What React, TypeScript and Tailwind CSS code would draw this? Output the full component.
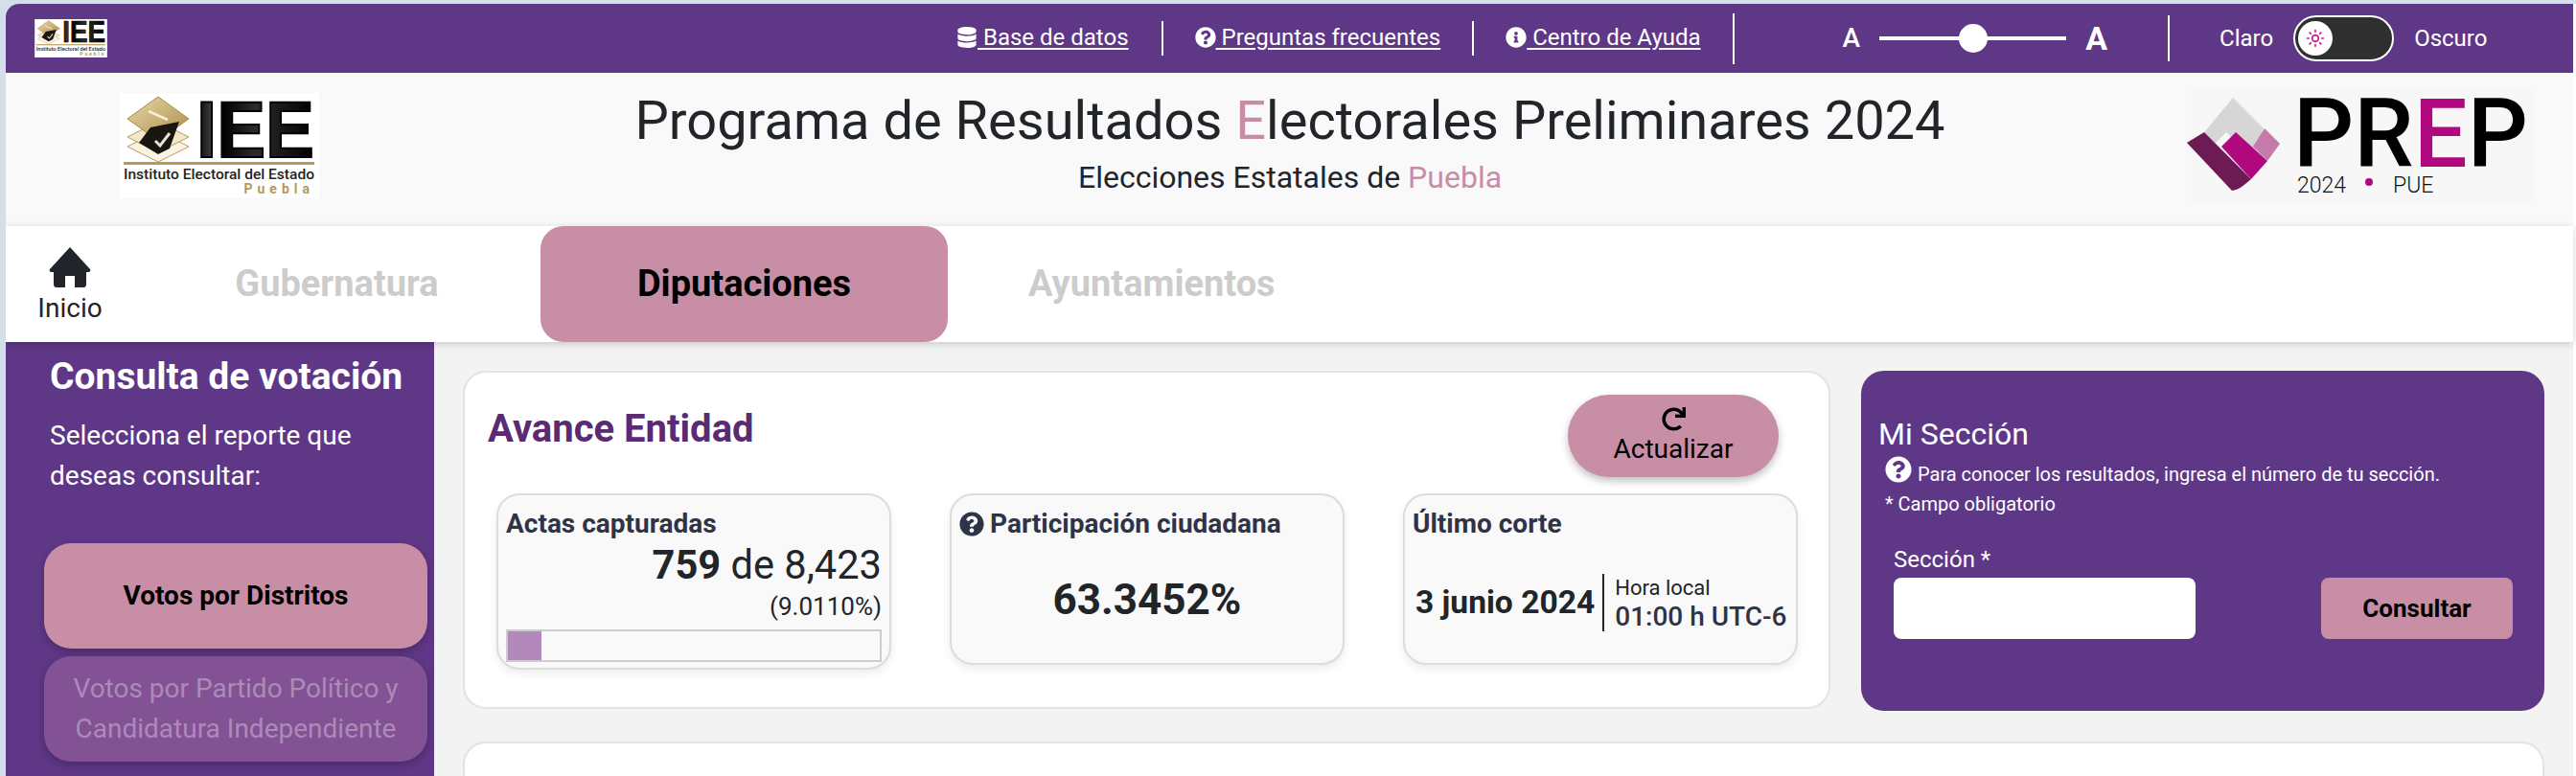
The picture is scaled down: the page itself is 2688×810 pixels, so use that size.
import { FaDatabase, FaInfoCircle, FaQuestionCircle, FaRedo } from "react-icons/fa";
import { Sun } from "lucide-react";

function IeeLogo({ className }: { className: string }) {
  return (
    <svg viewBox="0 0 208 110" className={className}>
      <defs>
        <linearGradient id="ieeLetras" x1="0" x2="1" y1="0" y2="0">
          <stop offset="0" stopColor="#000" />
          <stop offset="0.12" stopColor="#3a3a3a" />
          <stop offset="0.22" stopColor="#000" />
          <stop offset="0.5" stopColor="#2c2c2c" />
          <stop offset="1" stopColor="#000" />
        </linearGradient>
        <linearGradient id="ieeOro" x1="0" x2="1" y1="0" y2="1">
          <stop offset="0" stopColor="#e9d7a8" />
          <stop offset="1" stopColor="#a98a45" />
        </linearGradient>
      </defs>
      <rect width="208" height="110" fill="#fff" />
      <path d="M8 56 40 40 72 56 40 72Z" fill="#fbf4e2" stroke="#b79c5f" />
      <path d="M8 46 40 30 72 46 40 62Z" fill="#f4e7c9" stroke="#b79c5f" />
      <path d="M8 27 40 4 72 27 40 50Z" fill="url(#ieeOro)" stroke="#a98a45" />
      <path d="M30 19 50 28" stroke="#f8efd6" strokeWidth="2.5" />
      <path d="M20 52 32 36 62 30 52 58 40 64Z" fill="#191510" />
      <path d="M37 50 42 55 52 42" fill="none" stroke="#e6e2d6" strokeWidth="3" />
      <text
        x="80"
        y="67"
        textLength="123"
        lengthAdjust="spacingAndGlyphs"
        fontSize="84"
        fontWeight="900"
        stroke="#000"
        strokeWidth="2"
        fill="url(#ieeLetras)"
        fontFamily="Liberation Sans, sans-serif"
      >
        IEE
      </text>
      <rect x="4" y="72" width="199" height="3" fill="#b59a55" />
      <text x="4" y="90" textLength="199" lengthAdjust="spacingAndGlyphs" fontSize="15.5" fontWeight="500" fill="#1f1f1f" fontFamily="Roboto, sans-serif">
        Instituto Electoral del Estado
      </text>
      <text x="203" y="105" textAnchor="end" letterSpacing="5" fontSize="14" fontWeight="700" fill="#b59a55" fontFamily="Roboto, sans-serif">
        Puebla
      </text>
    </svg>
  );
}

function PrepLogo() {
  return (
    <svg viewBox="0 0 364 120" className="h-[120px] w-[364px]">
      <rect width="364" height="120" fill="#f7f7f7" />
      <path d="M49 9 81 41 69 74 57 60 42 45 27 60 19 45Z" fill="#d6d6d6" />
      <path d="M1 56 19 45 68 94C60 100 58 104 48 106Z" fill="#6e1a55" />
      <path d="M37 60 52 45 85 75 68 94Z" fill="#b0087f" />
      <path d="M70 60 82 41 98 57 85 75Z" fill="#c47aaa" />
      <text x="112" y="81" textLength="245" lengthAdjust="spacingAndGlyphs" fontSize="100" fontWeight="500" fill="#000" fontFamily="Roboto, sans-serif">
        PR<tspan fill="#b0087f">E</tspan>P
      </text>
      <text x="116" y="108" fontSize="23" fontWeight="300" fill="#111" fontFamily="Roboto, sans-serif">
        2024
      </text>
      <circle cx="191" cy="97" r="4" fill="#b0087f" />
      <text x="216" y="108" fontSize="23" fontWeight="300" fill="#111" fontFamily="Roboto, sans-serif">
        PUE
      </text>
    </svg>
  );
}

function HomeIcon() {
  return (
    <svg viewBox="0 0 44 44" className="h-[44px] w-[44px]" fill="#212529">
      <path d="M22 0 43 23C44 25 43 26 41 26H39V38C39 41 38 42 36 42H27V30H17V42H8C6 42 5 41 5 38V26H3C1 26 0 25 1 23Z" />
    </svg>
  );
}

export default function App() {
  return (
    <div className="h-[810px] w-full overflow-hidden bg-[#d3e0ea] pl-[6px] pt-[4px] [font-family:Roboto,sans-serif] text-[#212529]">
      <div className="flex h-[806px] flex-col overflow-hidden rounded-tl-[14px] bg-white pr-[3px]">
        {/* barra superior */}
        <div className="flex h-[72px] shrink-0 items-center bg-[#5f3787] text-[24px] text-white">
          <IeeLogo className="ml-[30px] h-[40px] w-[76px]" />
          <a className="ml-[886px] pb-[2px] underline underline-offset-[3px]">
            <FaDatabase className="inline h-[22px] w-[22px] align-[-3px]" /> Base de datos
          </a>
          <div className="ml-[34px] h-[36px] w-[2px] bg-white" />
          <a className="ml-[33px] pb-[2px] underline underline-offset-[3px]">
            <FaQuestionCircle className="inline h-[22px] w-[22px] align-[-3px]" /> Preguntas frecuentes
          </a>
          <div className="ml-[33px] h-[36px] w-[2px] bg-white" />
          <a className="ml-[33px] pb-[2px] underline underline-offset-[3px]">
            <FaInfoCircle className="inline h-[22px] w-[22px] align-[-3px]" /> Centro de Ayuda
          </a>
          <div className="ml-[33px] h-[53px] w-[2px] bg-white" />
          <span className="ml-[113px] text-[28px] font-medium">A</span>
          <div className="ml-[20px] flex h-[4px] w-[195px] items-center justify-center bg-white">
            <div className="h-[30px] w-[30px] rounded-full bg-white" />
          </div>
          <span className="ml-[20px] text-[34px] font-bold">A</span>
          <div className="ml-[63px] h-[48px] w-[2px] bg-white" />
          <span className="ml-[52px]">Claro</span>
          <div className="ml-[21px] flex h-[48px] w-[105px] items-center rounded-full border-2 border-white bg-[#2f2f2f] pl-[3px]">
            <div className="flex h-[36px] w-[36px] items-center justify-center rounded-full bg-white">
              <Sun className="h-[20px] w-[20px] text-[#c0118c]" />
            </div>
          </div>
          <span className="ml-[21px]">Oscuro</span>
        </div>

        {/* encabezado */}
        <div className="flex h-[160px] shrink-0 items-start bg-[#f9f9f9]">
          <IeeLogo className="ml-[119px] mt-[21px] h-[110px] w-[208px]" />
          <div className="ml-[78px] flex w-[1870px] flex-col items-center pt-[16px]">
            <h1 className="text-[56px] leading-[69px]">
              Programa de Resultados <span className="text-[#c78da6]">E</span>lectorales Preliminares 2024
            </h1>
            <p className="text-[32px] leading-[48px]">
              Elecciones Estatales de <span className="text-[#c78da6]">Puebla</span>
            </p>
          </div>
          <div className="mt-[17px] shrink-0">
            <PrepLogo />
          </div>
        </div>

        {/* pestañas */}
        <div className="z-10 flex h-[121px] shrink-0 items-center bg-white shadow-[0_2px_8px_rgba(0,0,0,0.18)]">
          <div className="ml-[34px] flex w-[66px] flex-col items-center pt-[6px]">
            <HomeIcon />
            <span className="text-[28px] leading-[40px]">Inicio</span>
          </div>
          <div className="ml-[139px] w-[213px] whitespace-nowrap text-center text-[38px] font-bold text-[#cccccc]">Gubernatura</div>
          <div className="ml-[106px] flex h-full w-[425px] items-center justify-center rounded-[24px] bg-[#c88ea6] text-[38px] font-bold text-black">
            Diputaciones
          </div>
          <div className="ml-[84px] text-[38px] font-bold text-[#cccccc]">Ayuntamientos</div>
        </div>

        <div className="flex min-h-0 flex-1">
          {/* lateral */}
          <aside className="w-[447px] shrink-0 bg-[#5f3787] pl-[40px] pr-[7px] text-white">
            <h2 className="mt-[14px] whitespace-nowrap pl-[6px] text-[39px] font-bold leading-[44px]">Consulta de votación</h2>
            <p className="mt-[19px] pl-[6px] text-[28px] leading-[42px]">
              Selecciona el reporte que
              <br />
              deseas consultar:
            </p>
            <button className="mt-[49px] flex h-[110px] w-full items-center justify-center rounded-[28px] bg-[#c88ea6] text-[28px] font-bold text-black shadow-[0_3px_8px_rgba(0,0,0,0.25)]">
              Votos por Distritos
            </button>
            <button className="mt-[8px] h-[110px] w-full rounded-[28px] bg-[#835295] text-[28px] leading-[42px] text-[#ab8bb8] shadow-[0_3px_8px_rgba(0,0,0,0.25)]">
              Votos por Partido Político y
              <br />
              Candidatura Independiente
            </button>
          </aside>

          {/* contenido */}
          <main className="min-w-0 flex-1 bg-[#f3f3f3] pl-[30px] pt-[30px]">
            <div className="flex gap-[32px]">
              <section className="h-[353px] w-[1427px] rounded-[24px] border-2 border-[#e3e3e3] bg-white">
                <div className="flex h-[126px]">
                  <h2 className="ml-[24px] mt-[33px] text-[40px] font-bold leading-[52px] text-[#5a2a72]">Avance Entidad</h2>
                  <button className="ml-auto mr-[52px] mt-[23px] flex h-[86px] w-[220px] flex-col items-center justify-center rounded-[43px] bg-[#c88ea6] text-[28px] leading-[34px] text-black shadow-[0_4px_8px_rgba(0,0,0,0.25)]">
                    <FaRedo className="mb-[2px] h-[25px] w-[25px]" />
                    Actualizar
                  </button>
                </div>
                <div className="ml-[33px] flex items-start gap-[61px]">
                  <div className="h-[184px] w-[412px] rounded-[24px] border-2 border-[#dcdcdc] bg-[#f9f9f9] px-[8px] shadow-[0_4px_8px_rgba(0,0,0,0.08)]">
                    <h3 className="mt-[12px] text-[28px] font-bold leading-[36px] text-[#2f3347]">Actas capturadas</h3>
                    <p className="text-right text-[41.6px] leading-[50px]">
                      <b>759</b> de 8,423
                    </p>
                    <p className="text-right text-[26px] leading-[36px]">(9.0110%)</p>
                    <div className="mt-[6px] h-[34px] w-full border-2 border-[#cccccc] bg-[#f9f9f9]">
                      <div className="h-full w-[9%] bg-[#b388bb]" />
                    </div>
                  </div>
                  <div className="h-[179px] w-[412px] rounded-[24px] border-2 border-[#dcdcdc] bg-[#f9f9f9] px-[8px] shadow-[0_4px_8px_rgba(0,0,0,0.08)]">
                    <h3 className="mt-[12px] flex items-center gap-[6px] whitespace-nowrap text-[28px] font-bold leading-[36px] text-[#2f3347]">
                      <FaQuestionCircle className="h-[26px] w-[26px]" />
                      Participación ciudadana
                    </h3>
                    <p className="mt-[36px] text-center text-[44px] font-bold leading-[50px]">63.3452%</p>
                  </div>
                  <div className="h-[179px] w-[412px] rounded-[24px] border-2 border-[#dcdcdc] bg-[#f9f9f9] px-[8px] shadow-[0_4px_8px_rgba(0,0,0,0.08)]">
                    <h3 className="mt-[12px] text-[28px] font-bold leading-[36px] text-[#2f3347]">Último corte</h3>
                    <div className="mt-[34px] flex items-center whitespace-nowrap">
                      <span className="ml-[3px] text-[33.6px] font-bold">3 junio 2024</span>
                      <div className="ml-[8px] flex h-[60px] flex-col justify-center border-l-2 border-[#212529] pl-[11px]">
                        <span className="text-[22px] leading-[30px]">Hora local</span>
                        <span className="text-[28px] font-medium leading-[30px] text-[#2f3347]">01:00 h UTC-6</span>
                      </div>
                    </div>
                  </div>
                </div>
              </section>

              <section className="h-[355px] w-[713px] rounded-[24px] bg-[#5f3787] pl-[18px] text-white">
                <h2 className="mt-[44px] text-[32px] leading-[45px]">Mi Sección</h2>
                <p className="ml-[7px] text-[20px] leading-[31px]">
                  <FaQuestionCircle className="mr-[6px] inline h-[28px] w-[28px] align-[-2px]" />
                  Para conocer los resultados, ingresa el número de tu sección.
                </p>
                <p className="ml-[7px] text-[20px] leading-[30px]">* Campo obligatorio</p>
                <div className="ml-[16px] mt-[25px] flex items-end">
                  <label className="flex w-[315px] flex-col text-[24px] leading-[37px]">
                    Sección *
                    <input className="h-[64px] w-full rounded-[8px] bg-white" />
                  </label>
                  <button className="ml-[131px] h-[64px] w-[200px] rounded-[8px] bg-[#c88ea6] text-[26px] font-bold text-black">
                    Consultar
                  </button>
                </div>
              </section>
            </div>
            <section className="mt-[32px] h-[120px] w-[2172px] rounded-[24px] border-2 border-[#e3e3e3] bg-white" />
          </main>
        </div>
      </div>
    </div>
  );
}
